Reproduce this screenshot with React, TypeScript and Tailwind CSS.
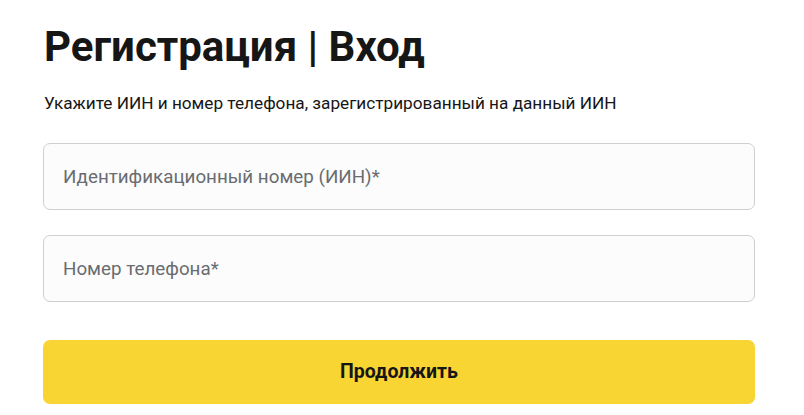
import React from "react";

export default function App() {
  return (
    <div className="min-h-screen bg-white" style={{ fontFamily: "Roboto, 'Noto Sans', sans-serif" }}>
      <div className="w-[712px] ml-[43px] pt-[23px]">
        <h1 className="text-[42px] font-bold leading-[48px] text-[#161616] ml-[1px]">Регистрация | Вход</h1>
        <p className="mt-[20px] text-[17.2px] leading-[24px] text-[#161616] ml-[1px]">
          Укажите ИИН и номер телефона, зарегистрированный на данный ИИН
        </p>
        <div className="mt-[28px] flex flex-col gap-[25px]">
          <input
            className="h-[67px] w-full rounded-[7px] border border-[#cfcfcf] bg-[#fcfcfc] px-[19px] text-[18.8px] text-[#161616] placeholder:text-[#696c70] outline-none"
            placeholder="Идентификационный номер (ИИН)*"
          />
          <input
            className="h-[67px] w-full rounded-[7px] border border-[#cfcfcf] bg-[#fcfcfc] px-[19px] text-[18.8px] text-[#161616] placeholder:text-[#696c70] outline-none"
            placeholder="Номер телефона*"
          />
        </div>
        <button className="mt-[38px] h-[64px] w-full rounded-[7px] bg-[#f9d533] text-[19.5px] font-bold text-[#161616]">
          Продолжить
        </button>
      </div>
    </div>
  );
}
